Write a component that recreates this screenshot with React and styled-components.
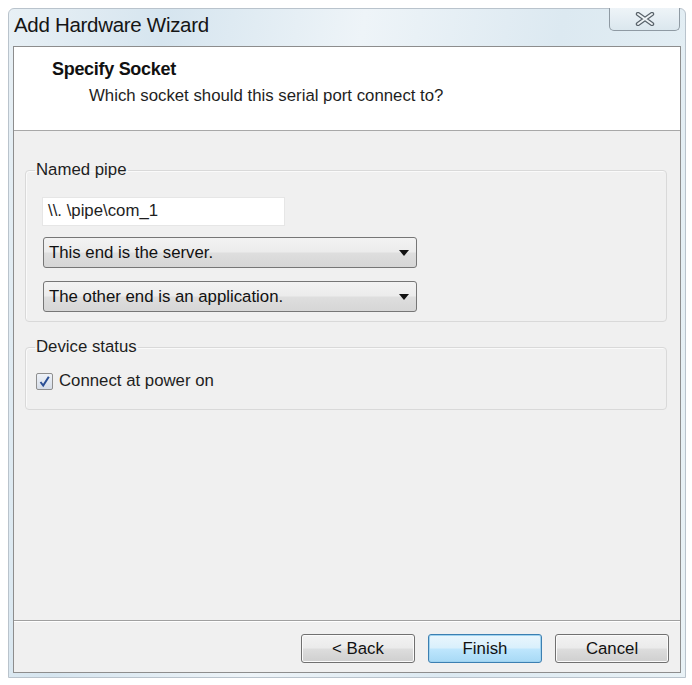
import React from 'react'
import styled, { createGlobalStyle } from 'styled-components'

const GlobalStyle = createGlobalStyle`
  html, body {
    margin: 0;
    background: #ffffff;
  }
  body {
    font-family: "Liberation Sans", Arial, sans-serif;
    color: #1e1e1e;
  }
`

const Frame = styled.div`
  margin: 8px 0 0 8px;
  width: 678px;
  height: 670px;
  box-sizing: border-box;
  padding: 0 4px 4px 4px;
  display: flex;
  flex-direction: column;
  border: 1px solid #b9c3cc;
  border-radius: 6px 6px 0 0;
  background: linear-gradient(100deg, #e8f0f5 0%, #d6e5ef 20%, #eef4f8 45%, #dce9f1 70%, #e9f2f6 100%);
`

const TitleBar = styled.div`
  height: 37px;
  display: flex;
  align-items: center;
  justify-content: space-between;
`

const Title = styled.div`
  font-size: 20.5px;
  padding-left: 1px;
  margin-top: -5px;
  color: #151515;
  letter-spacing: -0.3px;
`

const CloseButton = styled.div`
  align-self: flex-start;
  margin-top: -1px;
  margin-right: 1px;
  width: 71px;
  height: 23px;
  box-sizing: border-box;
  border: 1px solid #8f9aa3;
  border-top: none;
  border-radius: 0 0 5px 5px;
  background: linear-gradient(#eef4f8, #dbe7ee);
  display: flex;
  align-items: center;
  justify-content: center;
`

const Client = styled.div`
  flex: 1;
  display: flex;
  flex-direction: column;
  border: 1px solid #8d8d8d;
  background: #f0f0f0;
`

const Header = styled.div`
  height: 84px;
  background: #ffffff;
  border-bottom: 1px solid #a8a8a8;
  padding: 12px 0 0 38px;
  box-sizing: border-box;
`

const HeaderTitle = styled.div`
  font-size: 18px;
  font-weight: bold;
  color: #111;
  letter-spacing: -0.3px;
`

const HeaderSub = styled.div`
  font-size: 16.8px;
  margin: 6px 0 0 37px;
  color: #1e1e1e;
`

const Body = styled.div`
  flex: 1;
  padding: 29px 13px 0 11px;
  display: flex;
  flex-direction: column;
  gap: 15px;
`

const Group = styled.fieldset`
  margin: 0;
  padding: ${p => p.$pad};
  border: 1px solid #d9d9d9;
  border-radius: 4px;
  box-shadow: inset 1px 1px 0 #fafafa;
  display: flex;
  flex-direction: column;
  align-items: flex-start;
  gap: ${p => p.$gap || '0px'};
`

const Legend = styled.legend`
  font-size: 16.8px;
  padding: 0 1px;
  margin-left: -2px;
  color: #1e1e1e;
`

const TextInput = styled.div`
  width: 243px;
  height: 29px;
  box-sizing: border-box;
  background: #ffffff;
  border: 1px solid #e6e6e6;
  font-size: 16.8px;
  padding: 3px 0 0 5px;
  margin-left: 5px;
`

const Select = styled.div`
  width: 374px;
  height: 31px;
  box-sizing: border-box;
  margin-left: 6px;
  margin-top: ${p => p.$offset || '0px'};
  border: 1px solid #767676;
  border-radius: 3px;
  background: linear-gradient(#f3f3f3 0%, #ececec 48%, #dedede 52%, #d6d6d6 100%);
  display: flex;
  align-items: center;
  justify-content: space-between;
  padding: 0 7px 0 5px;
  font-size: 16.8px;
  color: #111;
`

const Arrow = styled.span`
  width: 0;
  height: 0;
  border-left: 5px solid transparent;
  border-right: 5px solid transparent;
  border-top: 6px solid #111;
`

const CheckRow = styled.label`
  display: flex;
  align-items: center;
  gap: 6px;
  margin-left: -1px;
  margin-top: -1px;
  font-size: 16.8px;
`

const CheckBox = styled.span`
  width: 17px;
  height: 17px;
  box-sizing: border-box;
  border: 1px solid #8f8f8f;
  border-radius: 2px;
  background: linear-gradient(#eef2f8, #d6dde8);
  display: flex;
  align-items: center;
  justify-content: center;
`

const Footer = styled.div`
  height: 52px;
  border-top: 1px solid #a0a0a0;
  box-shadow: inset 0 1px 0 #ffffff;
  display: flex;
  justify-content: flex-end;
  align-items: flex-start;
  padding: 13px 11px 0 0;
  box-sizing: border-box;
  gap: 13px;
`

const Button = styled.div`
  width: 114px;
  height: 29px;
  box-sizing: border-box;
  border: 1px solid ${p => (p.$primary ? '#3c7fb1' : '#707070')};
  border-radius: 3px;
  background: ${p =>
    p.$primary
      ? 'linear-gradient(#eaf6fd 0%, #d9f0fc 48%, #bee6fd 52%, #a7d9f5 100%)'
      : 'linear-gradient(#f2f2f2 0%, #ebebeb 48%, #dddddd 52%, #cfcfcf 100%)'};
  box-shadow: inset 0 0 0 1px ${p => (p.$primary ? '#9fd3f0' : '#fbfbfb')};
  display: flex;
  align-items: center;
  justify-content: center;
  font-size: 16.8px;
  color: #111;
`

const App = () => (
  <>
    <GlobalStyle />
    <Frame>
      <TitleBar>
        <Title>Add Hardware Wizard</Title>
        <CloseButton>
          <svg width="20" height="14" viewBox="0 0 20 14">
            <path d="M3 2 L17 12 M17 2 L3 12" stroke="#59636b" strokeWidth="4.4" strokeLinecap="round" fill="none" />
            <path d="M3 2 L17 12 M17 2 L3 12" stroke="#eef3f6" strokeWidth="2" strokeLinecap="round" fill="none" />
          </svg>
        </CloseButton>
      </TitleBar>
      <Client>
        <Header>
          <HeaderTitle>Specify Socket</HeaderTitle>
          <HeaderSub>Which socket should this serial port connect to?</HeaderSub>
        </Header>
        <Body>
          <Group $pad="17px 0 9px 11px" $gap="11px">
            <Legend>Named pipe</Legend>
            <TextInput>\\. \pipe\com_1</TextInput>
            <Select>
              This end is the server.
              <Arrow />
            </Select>
            <Select $offset="2px">
              The other end is an application.
              <Arrow />
            </Select>
          </Group>
          <Group $pad="15px 0 18px 11px">
            <Legend>Device status</Legend>
            <CheckRow>
              <CheckBox>
                <svg width="13" height="13" viewBox="0 0 13 13">
                  <path d="M2.5 7 L5.2 10.5 L10.8 1.8" stroke="#2b4f95" strokeWidth="2" fill="none" />
                </svg>
              </CheckBox>
              Connect at power on
            </CheckRow>
          </Group>
        </Body>
        <Footer>
          <Button>&lt; Back</Button>
          <Button $primary>Finish</Button>
          <Button>Cancel</Button>
        </Footer>
      </Client>
    </Frame>
  </>
)

export default App
